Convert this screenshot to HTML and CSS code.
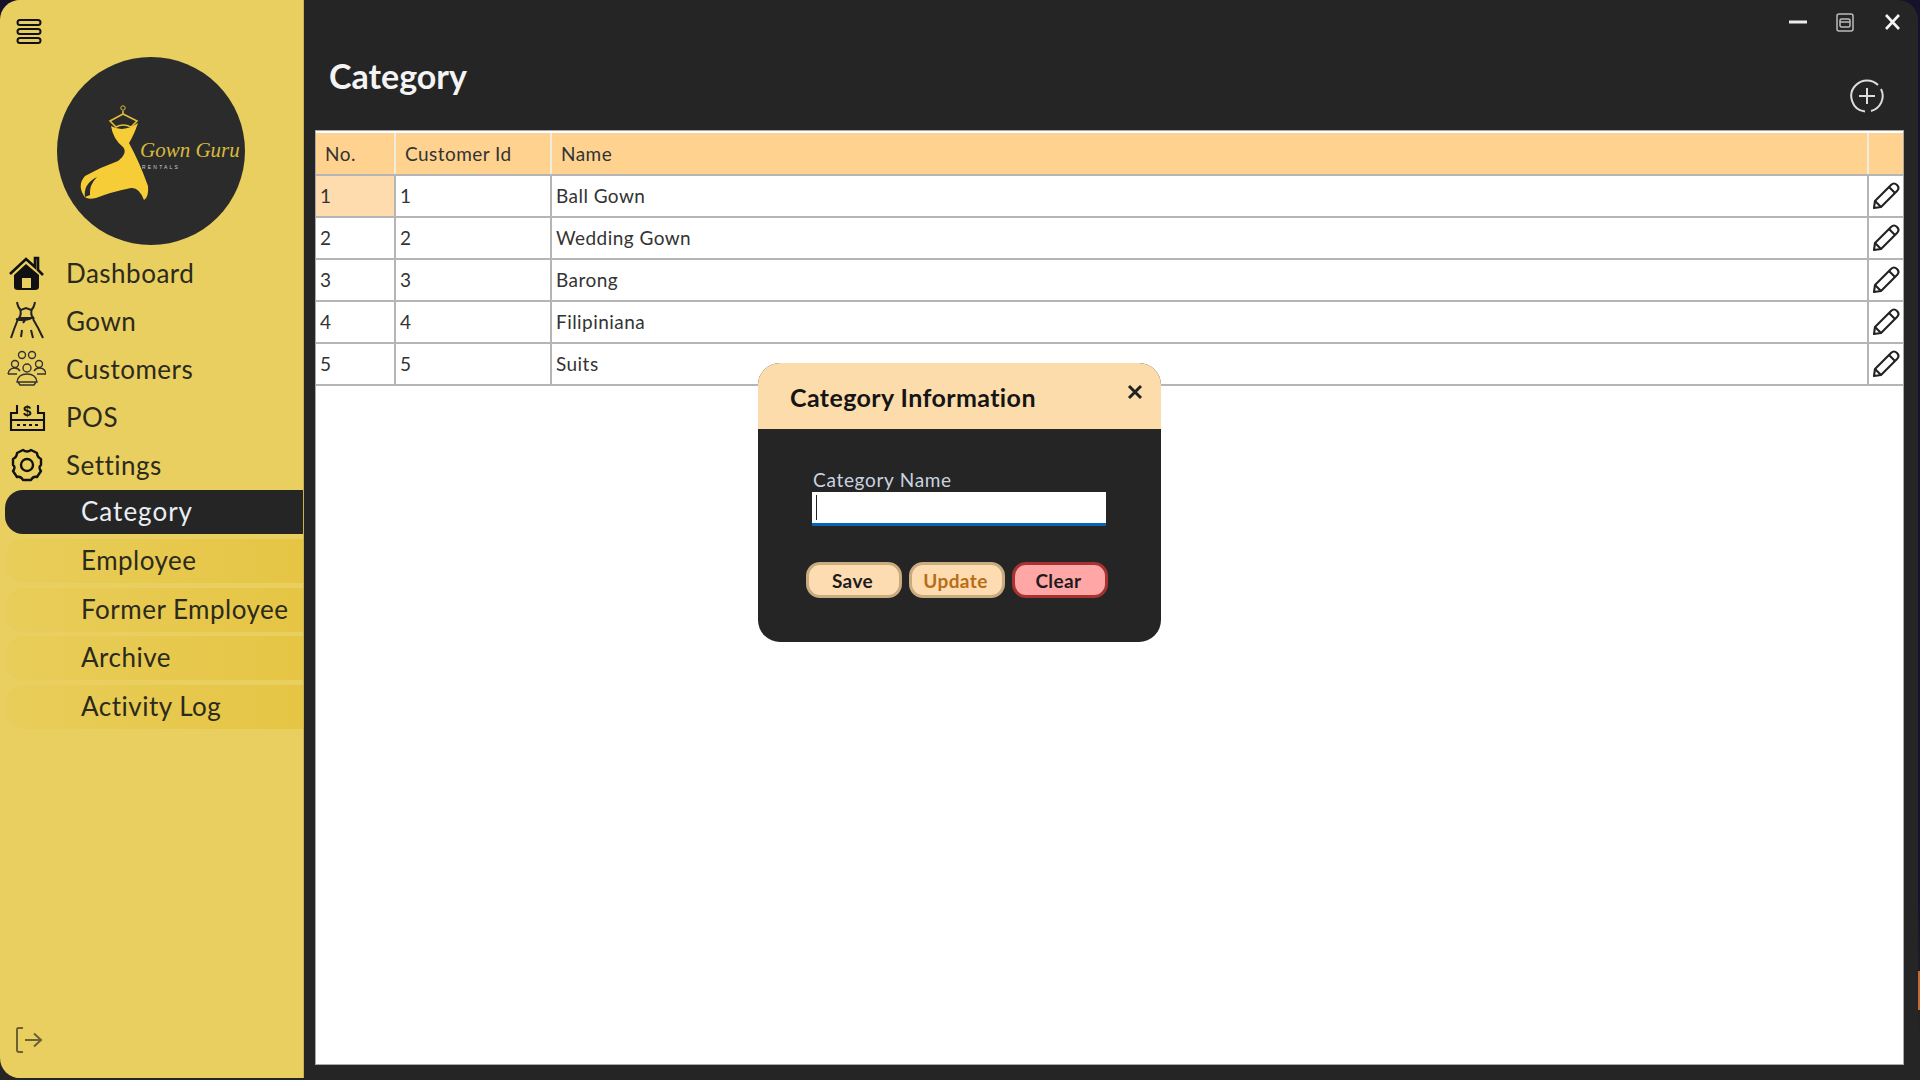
FILE: index.html
```html
<!DOCTYPE html>
<html lang="en">
<head>
    <meta charset="UTF-8">
    <title>Gown Guru Rentals - Category</title>
    <link rel="stylesheet" href="styles.css">
</head>
<body>
    <div class="edge-mark"></div>

    <div class="window">
        <aside class="sidebar">
            <svg class="menu-icon" viewBox="0 0 26 26" width="26" height="26">
                <rect x="1.5" y="1" width="23" height="5" rx="2.5"/>
                <rect x="1.5" y="10" width="23" height="5" rx="2.5"/>
                <rect x="1.5" y="19" width="23" height="5" rx="2.5"/>
            </svg>

            <svg class="logo" viewBox="56 56 188 188" width="188" height="188">
                <circle cx="150" cy="150" r="94" fill="#2b2b2b"/>
                <circle cx="122" cy="107" r="2.2" fill="none" stroke="#d8b93c" stroke-width="1"/>
                <path d="M122 110 V113 M122 113 L109 120 L115 126 Q122 122 130 126 L136 120 Z" fill="none" stroke="#e2bd36" stroke-width="1.6"/>
                <path d="M110 125 Q122 132 137 122 Q133 134 128 142 Q138 160 147 185 Q148 196 143 199 Q138 186 130 187 Q110 191 95 197 Q86 199 83 195 Q76 184 84 175 Q100 166 117 160 Q127 152 122 146 Q112 138 110 125 Z" fill="#f6cd36"/>
                <path d="M84 196 Q82 183 96 176 Q88 184 89 194 Z" fill="#2b2b2b"/>
                <text class="logo-name" x="139" y="156">Gown Guru</text>
                <text class="logo-sub" x="141" y="168">RENTALS</text>
            </svg>

            <nav class="nav">
                <a class="nav-item">
                    <svg class="nav-icon" viewBox="0 0 40 40" width="40" height="40">
                        <path d="M4 21 L20 6 L29 14 V5 H32 V17 L37 22" fill="none" stroke="#111" stroke-width="2.6"/>
                        <path fill-rule="evenodd" d="M8 22 L20 11 L33 22 V34 Q33 37 29 37 H12 Q8 37 8 34 Z M16 25 V35 H25 V25 Z" fill="#111"/>
                    </svg>
                    Dashboard
                </a>
                <a class="nav-item">
                    <svg class="nav-icon" viewBox="0 0 40 40" width="40" height="40" fill="none" stroke="#222" stroke-width="2">
                        <path d="M11 1 Q12 7 15 9 L20 7 L25 9 Q28 7 29 1"/>
                        <path d="M14 8 Q16 13 13 17 H27 Q24 13 26 8"/>
                        <path d="M10 18 Q20 21 28 16 M20 18 L17 22"/>
                        <path d="M12 18 Q8 28 5 37 M27 18 Q33 28 37 37 M16 29 L15 36 M25 29 L27 37"/>
                    </svg>
                    Gown
                </a>
                <a class="nav-item">
                    <svg class="nav-icon" viewBox="0 0 40 40" width="40" height="40" fill="none" stroke="#333" stroke-width="1.4">
                        <circle cx="16" cy="6" r="3.5"/>
                        <circle cx="26" cy="6" r="3.5"/>
                        <circle cx="9" cy="15" r="3.5"/>
                        <circle cx="33" cy="15" r="3.5"/>
                        <circle cx="21" cy="19" r="4"/>
                        <path d="M2 25 Q3 19 9 19 Q12 19 14 22 M40 25 Q39 19 33 19 Q30 19 28 22 M2 25 H11 M31 25 H40"/>
                        <path d="M11 33 Q12 25 21 25 Q30 25 31 33 Z M12 33 L14 36 H28 L30 33"/>
                    </svg>
                    Customers
                </a>
                <a class="nav-item">
                    <svg class="nav-icon" viewBox="0 0 40 40" width="40" height="40" fill="none" stroke="#111" stroke-width="2.1">
                        <path d="M11 8 V16 H5 V33 H38 V16 H32 V8"/>
                        <path d="M5 23 H38"/>
                        <path d="M11 28 H32" stroke-dasharray="3 3" stroke-width="2"/>
                        <text class="pos-dollar" x="21.5" y="19" text-anchor="middle">$</text>
                    </svg>
                    POS
                </a>
                <a class="nav-item">
                    <svg class="nav-icon" viewBox="0 0 40 40" width="40" height="40" fill="none" stroke="#111" stroke-width="2.4">
                        <circle cx="21" cy="20" r="6"/>
                        <path d="M17 5 Q21 8 25 5 L31 8 Q31 12 35 14 L35 20 Q32 22 35 26 L31 32 Q27 31 25 35 H17 Q15 31 11 32 L7 26 Q10 22 7 20 L7 14 Q11 12 11 8 Z" stroke-linejoin="round"/>
                    </svg>
                    Settings
                </a>
            </nav>

            <div class="subnav">
                <a class="sub-item active">Category</a>
                <a class="sub-item">Employee</a>
                <a class="sub-item">Former Employee</a>
                <a class="sub-item">Archive</a>
                <a class="sub-item">Activity Log</a>
            </div>

            <svg class="logout" viewBox="0 0 28 28" width="28" height="28" fill="none" stroke="#6b6136" stroke-width="2">
                <path d="M8 2 H3.5 Q2 2 2 3.5 V24 Q2 26 4 26 H8"/>
                <path d="M10 14 H26 M19 7.5 L26 14 L19 20.5"/>
            </svg>
        </aside>

        <main class="main">
            <div class="controls">
                <svg viewBox="0 0 20 20" width="20" height="20"><path d="M1 10 H19" stroke="#eee" stroke-width="3"/></svg>
                <svg viewBox="0 0 20 20" width="20" height="20" fill="none" stroke="#bbb" stroke-width="1.5">
                    <rect x="2" y="2" width="16" height="17" rx="2"/>
                    <rect x="5" y="7" width="10" height="8" rx="1.5"/>
                    <path d="M5 10 H15"/>
                </svg>
                <svg viewBox="0 0 20 20" width="20" height="20"><path d="M4 3 L17 17 M17 3 L4 17" stroke="#f4f4f4" stroke-width="2.6"/></svg>
            </div>

            <div class="title-row">
                <h1 class="page-title">Category</h1>
                <svg class="add-icon" viewBox="0 0 36 36" width="36" height="36" fill="none" stroke="#ddd" stroke-width="2">
                    <path d="M7 7 A15.5 15.5 0 0 1 29 7 M32 11 A15.5 15.5 0 0 1 22 33 M16 33.5 A15.5 15.5 0 0 1 7 7"/>
                    <path d="M18 10 V26 M10 18 H26"/>
                </svg>
            </div>

            <div class="table-panel">
                <table class="data-table">
                    <colgroup>
                        <col class="col-no">
                        <col class="col-id">
                        <col>
                        <col class="col-edit">
                    </colgroup>
                    <thead>
                        <tr><th>No.</th><th>Customer Id</th><th>Name</th><th></th></tr>
                    </thead>
                    <tbody>
                        <tr>
                            <td class="selected">1</td><td>1</td><td>Ball Gown</td>
                            <td class="edit-cell"><svg class="pencil" viewBox="0 0 30 30" width="30" height="30"><use href="#pencil"/></svg></td>
                        </tr>
                        <tr>
                            <td>2</td><td>2</td><td>Wedding Gown</td>
                            <td class="edit-cell"><svg class="pencil" viewBox="0 0 30 30" width="30" height="30"><use href="#pencil"/></svg></td>
                        </tr>
                        <tr>
                            <td>3</td><td>3</td><td>Barong</td>
                            <td class="edit-cell"><svg class="pencil" viewBox="0 0 30 30" width="30" height="30"><use href="#pencil"/></svg></td>
                        </tr>
                        <tr>
                            <td>4</td><td>4</td><td>Filipiniana</td>
                            <td class="edit-cell"><svg class="pencil" viewBox="0 0 30 30" width="30" height="30"><use href="#pencil"/></svg></td>
                        </tr>
                        <tr>
                            <td>5</td><td>5</td><td>Suits</td>
                            <td class="edit-cell"><svg class="pencil" viewBox="0 0 30 30" width="30" height="30"><use href="#pencil"/></svg></td>
                        </tr>
                    </tbody>
                </table>
            </div>
        </main>

        <div class="dialog">
            <div class="dialog-head">
                <h2 class="dialog-title">Category Information</h2>
                <svg class="dialog-close" viewBox="0 0 16 16" width="16" height="16"><path d="M2 2 L14 14 M14 2 L2 14" stroke="#222" stroke-width="3"/></svg>
            </div>
            <div class="dialog-body">
                <label class="field-label" for="categoryName">Category Name</label>
                <div class="field-input" id="categoryName"><span class="caret"></span></div>
                <div class="dialog-buttons">
                    <button class="btn btn-save" type="button">Save</button>
                    <button class="btn btn-update" type="button">Update</button>
                    <button class="btn btn-clear" type="button">Clear</button>
                </div>
            </div>
        </div>
    </div>

    <svg class="defs" width="0" height="0">
        <defs>
            <g id="pencil" fill="none" stroke="#222" stroke-width="2.1" stroke-linejoin="round">
                <path d="M3 27 L4 20 L20 4 Q23 1 26 4 Q29 7 26 10 L10 26 Z"/>
                <path d="M18 6 L24 12 M4 20 L10 26"/>
            </g>
        </defs>
    </svg>
</body>
</html>
```

FILE: styles.css
```css
* {
    box-sizing: border-box;
}
html, body {
    height: 100%;
}
body {
    margin: 0;
    width: 1920px;
    height: 1080px;
    overflow: hidden;
    position: relative;
    font-family: Lato, "Open Sans", sans-serif;
    background: linear-gradient(#17122b 0, #17122b 900px, #252525 1040px);
    color: #222;
}
.edge-mark {
    position: absolute;
    right: 0;
    top: 971px;
    width: 2px;
    height: 39px;
    background-color: #c46a32;
}
.window {
    position: relative;
    display: flex;
    width: 1918px;
    height: 1080px;
    border-radius: 20px 20px 0 0;
    overflow: hidden;
    background-color: #252525;
}
.sidebar {
    position: relative;
    width: 303px;
    height: 1078px;
    flex-shrink: 0;
    padding-top: 19px;
    background-color: #e9cf60;
    box-shadow: 1px 0 0 #c9b252;
    border-radius: 0 0 0 20px;
}
.menu-icon {
    display: block;
    margin-left: 16px;
}
.menu-icon rect {
    fill: #e6cc68;
    stroke: #111;
    stroke-width: 2;
}
.logo {
    display: block;
    margin: 12px 0 4px 57px;
}
.logo-name {
    font-family: "Liberation Serif", serif;
    font-style: italic;
    font-size: 21px;
    fill: #d8b93c;
}
.logo-sub {
    font-family: "Liberation Sans", sans-serif;
    font-size: 5px;
    letter-spacing: 2.2px;
    fill: #cfcfcf;
}
.nav {
    display: flex;
    flex-direction: column;
}
.nav-item {
    display: flex;
    align-items: center;
    height: 48px;
    padding-left: 6px;
    gap: 20px;
    font-size: 26px;
    letter-spacing: 0.5px;
    color: #2b2a1c;
}
.nav-icon {
    flex-shrink: 0;
}
.pos-dollar {
    font-family: "Liberation Sans", sans-serif;
    font-size: 15px;
    font-weight: bold;
    fill: #111;
    stroke: none;
}
.subnav {
    display: flex;
    flex-direction: column;
    gap: 4.75px;
    margin-top: 1px;
    margin-left: 5px;
}
.sub-item {
    display: flex;
    align-items: center;
    height: 44px;
    padding: 0 0 2px 76px;
    font-size: 26px;
    letter-spacing: 0.5px;
    color: #2b2a1c;
    border-radius: 18px 0 0 18px;
    background: linear-gradient(90deg, #e8cd5a, #e6c544);
}
.sub-item.active {
    background: #252525;
    color: #e8eef4;
    letter-spacing: 1px;
}
.logout {
    position: absolute;
    left: 15px;
    top: 1026px;
}
.main {
    flex: 1;
    display: flex;
    flex-direction: column;
    padding: 12px 14px 15px 12px;
    min-width: 0;
}
.controls {
    display: flex;
    justify-content: flex-end;
    gap: 27px;
    height: 20px;
    margin-right: 2px;
}
.title-row {
    display: flex;
    justify-content: space-between;
    align-items: flex-start;
    height: 98px;
    padding-left: 14px;
}
.page-title {
    margin: 24px 0 0;
    font-size: 34px;
    line-height: 40px;
    font-weight: 700;
    color: #f4f4f4;
}
.add-icon {
    margin: 46px 19px 0 0;
}
.table-panel {
    flex: 1;
    background-color: #fff;
    border: 1px solid #a9a9a9;
    padding-top: 2px;
}
.data-table {
    width: 100%;
    table-layout: fixed;
    border-collapse: collapse;
    font-size: 19px;
    letter-spacing: 0.45px;
    color: #333;
}
.col-no {
    width: 79px;
}
.col-id {
    width: 156px;
}
.col-edit {
    width: 35px;
}
.data-table th {
    height: 42px;
    padding: 0 0 1px 9px;
    text-align: left;
    font-weight: 400;
    background-color: #ffd28f;
    border-right: 2px solid #f1ece2;
    border-bottom: 2px solid #b5b5b5;
}
.data-table th:last-child {
    border-right: 0;
}
.data-table td {
    height: 42px;
    padding: 0 0 1px 4px;
    border-right: 2px solid #b5b5b5;
    border-bottom: 2px solid #b5b5b5;
}
.data-table td:last-child {
    border-right: 0;
}
.data-table td.selected {
    background-color: #fedcae;
}
.data-table td.edit-cell {
    padding: 0 0 0 2px;
    line-height: 0;
}
.defs {
    position: absolute;
}
.dialog {
    position: absolute;
    left: 758px;
    top: 363px;
    width: 403px;
    height: 279px;
    border-radius: 22px;
    overflow: hidden;
    background-color: #252525;
}
.dialog-head {
    display: flex;
    justify-content: space-between;
    align-items: center;
    height: 66px;
    padding: 2px 18px 0 32px;
    background-color: #fddcab;
}
.dialog-title {
    margin: 0;
    font-size: 25px;
    font-weight: 700;
    letter-spacing: 0.4px;
    color: #151515;
}
.dialog-close {
    margin-bottom: 10px;
}
.dialog-body {
    display: flex;
    flex-direction: column;
    padding: 40px 0 0 54px;
}
.field-label {
    font-size: 19px;
    line-height: 21px;
    margin: 0 0 2px 1px;
    letter-spacing: 0.7px;
    color: #c9d3e0;
}
.field-input {
    width: 294px;
    height: 34px;
    padding: 3px 0 0 4px;
    background-color: #fff;
    border-bottom: 3px solid #0a64b4;
}
.caret {
    display: block;
    width: 1px;
    height: 25px;
    background-color: #222;
}
.dialog-buttons {
    display: flex;
    gap: 7px;
    margin: 36px 0 0 -6px;
}
.btn {
    width: 96px;
    height: 36px;
    padding: 0 3px 0 0;
    font-family: inherit;
    font-size: 19px;
    font-weight: 700;
    letter-spacing: 0.4px;
    border-radius: 14px;
    border: 3px solid #c9ab80;
    background-color: #fddcb2;
    color: #1c1c1c;
}
.btn-update {
    color: #b86d14;
}
.btn-clear {
    background-color: #ffa6a6;
    border-color: #a83232;
}
```
